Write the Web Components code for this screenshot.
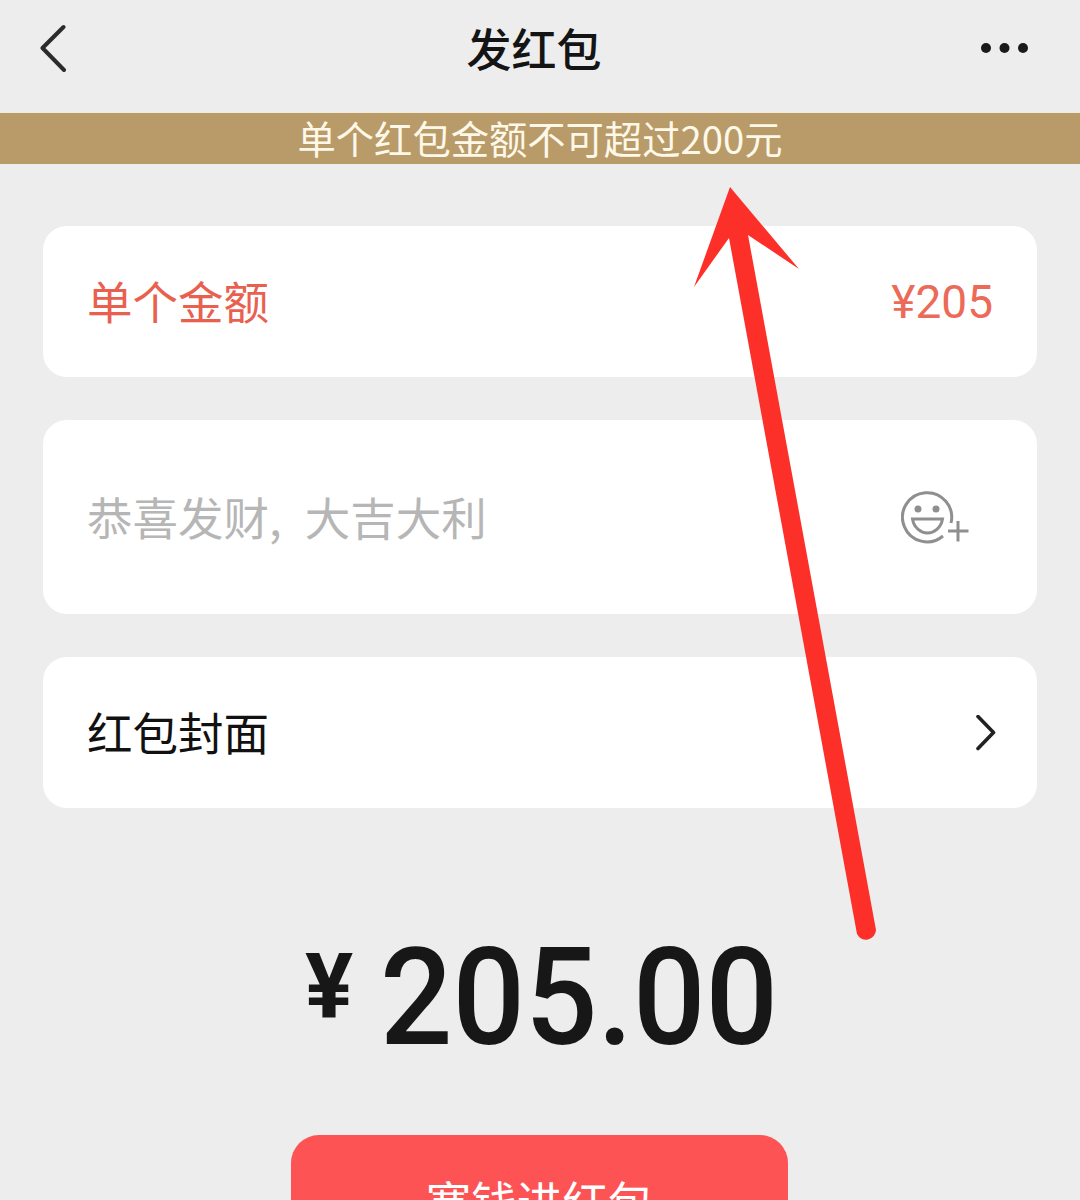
<!DOCTYPE html>
<html lang="zh">
<head>
<meta charset="utf-8">
<title>发红包</title>
<style>
  html, body { margin: 0; height: 100%; }
  body {
    width: 1080px; height: 1200px; overflow: hidden; position: relative;
    background: #ededed;
    font-family: "Noto Sans CJK SC", "Liberation Sans", sans-serif;
  }
</style>
</head>
<body>
<rp-nav>发红包</rp-nav>
<rp-banner>单个红包金额不可超过200元</rp-banner>
<rp-cards>
  <rp-card height="151" tone="#e9604f">
    单个金额
    <span slot="end" style="font-size:46px;color:#ec6a58;font-family:Roboto,sans-serif">¥205</span>
  </rp-card>
  <rp-card height="194" tone="#b6b6b6" style="--label-shift:0px">
    恭喜发财<span style="letter-spacing:23px">,</span>大吉大利
    <rp-icon slot="end" name="emoji" style="margin-right:24px"></rp-icon>
  </rp-card>
  <rp-card height="151" tone="#111">
    红包封面
    <rp-icon slot="end" name="chevron" style="margin-right:-3px"></rp-icon>
  </rp-card>
</rp-cards>
<rp-amount value="205.00"></rp-amount>
<rp-button>塞钱进红包</rp-button>
<rp-arrow></rp-arrow>

<script>
const icons = {
  back: '<svg width="30" height="48" viewBox="0 0 30 48"><path d="M23.500 3 L2.500 24 L24 46" fill="none" stroke="#2b2b2b" stroke-width="4" stroke-linecap="round" stroke-linejoin="round"/></svg>',
  more: '<svg width="50" height="12" viewBox="0 0 50 12"><circle cx="6" cy="6" r="5" fill="#1a1a1a"/><circle cx="24.500" cy="6" r="5" fill="#1a1a1a"/><circle cx="43" cy="6" r="5" fill="#1a1a1a"/></svg>',
  chevron: '<svg width="20" height="36" viewBox="0 0 20 36"><path d="M2 1.500 L17.500 17.500 L2 33.500" fill="none" stroke="#222" stroke-width="3.600" stroke-linecap="round" stroke-linejoin="round"/></svg>',
  emoji: `<svg width="68" height="54" viewBox="0 0 68 54" fill="none" stroke="#8f8f8f" stroke-width="3">
    <path d="M42 46 A24.600 24.600 0 1 1 50 33"/>
    <circle cx="17" cy="19" r="3.500" fill="#8f8f8f" stroke="none"/>
    <circle cx="35" cy="19" r="3.500" fill="#8f8f8f" stroke="none"/>
    <path d="M11.500 29 H41.500 C40 38 33 43 26.500 43 C20 43 13 38 11.500 29 Z"/>
    <path d="M47 41 H67.500 M57 31 V51.500"/>
  </svg>`
};

class RpIcon extends HTMLElement {
  connectedCallback() {
    const root = this.attachShadow({ mode: 'open' });
    root.innerHTML = `<style>:host{display:inline-flex;align-items:center}</style>${icons[this.getAttribute('name')] || ''}`;
  }
}

class RpNav extends HTMLElement {
  connectedCallback() {
    const root = this.attachShadow({ mode: 'open' });
    root.innerHTML = `
      <style>
        :host { display: flex; height: 112px; align-items: center; justify-content: space-between;
                padding: 0 50px 16px 40px; box-sizing: border-box; }
        .title { font-size: 45px; font-weight: 500; color: #141414; line-height: 1; margin-left: 18px; margin-top: -2px; }
      </style>
      <rp-icon name="back"></rp-icon>
      <div class="title"><slot></slot></div>
      <rp-icon name="more"></rp-icon>`;
  }
}

class RpBanner extends HTMLElement {
  connectedCallback() {
    const root = this.attachShadow({ mode: 'open' });
    root.innerHTML = `
      <style>
        :host { display: flex; height: 52px; align-items: center; justify-content: center; box-sizing: border-box;
                padding-bottom: 1px; background: #b99b69; border-top: 1px solid #f3ecd8; color: #fdf8e8;
                font-size: 38.300px; line-height: 1; }
      </style>
      <slot></slot>`;
  }
}

class RpCards extends HTMLElement {
  connectedCallback() {
    const root = this.attachShadow({ mode: 'open' });
    root.innerHTML = `
      <style>:host { display: flex; flex-direction: column; gap: 43px; padding: 62px 43px 0; }</style>
      <slot></slot>`;
  }
}

class RpCard extends HTMLElement {
  connectedCallback() {
    const root = this.attachShadow({ mode: 'open' });
    root.innerHTML = `
      <style>
        :host { display: flex; align-items: center; justify-content: space-between; box-sizing: border-box;
                height: ${this.getAttribute('height')}px; padding: 0 44px; background: #fff; border-radius: 24px;
                font-size: 45.500px; line-height: 1; color: ${this.getAttribute('tone')}; }
        .label { margin-top: var(--label-shift, -2px); }
      </style>
      <div class="label"><slot></slot></div>
      <slot name="end"></slot>`;
  }
}

class RpAmount extends HTMLElement {
  connectedCallback() {
    const root = this.attachShadow({ mode: 'open' });
    root.innerHTML = `
      <style>
        :host { display: flex; align-items: flex-start; margin-top: 120px; height: 207px; padding-left: 305px;
                font-family: Roboto, "Liberation Sans", sans-serif; color: #171717; }
        .cur { font-size: 90px; font-weight: 700; line-height: 120px; margin-right: 27px; }
        .val { font-size: 135px; font-weight: 500; line-height: 141px; transform: scaleX(.945); transform-origin: left top; }
      </style>
      <span class="cur">¥</span><span class="val">${this.getAttribute('value')}</span>`;
  }
}

class RpButton extends HTMLElement {
  connectedCallback() {
    const root = this.attachShadow({ mode: 'open' });
    root.innerHTML = `
      <style>
        :host { display: flex; justify-content: center; box-sizing: border-box; width: 497px; height: 65px;
                overflow: hidden; margin-left: 291px; padding-top: 43px; background: #fd5355;
                border-radius: 28px 28px 0 0; color: #fff; font-size: 45.500px; line-height: 1; }
      </style>
      <slot></slot>`;
  }
}

// red annotation arrow drawn over the screenshot
class RpArrow extends HTMLElement {
  connectedCallback() {
    const root = this.attachShadow({ mode: 'open' });
    root.innerHTML = `
      <style>:host { position: absolute; left: 0; top: 0; pointer-events: none; } svg { display: block; }</style>
      <svg width="1080" height="1200" viewBox="0 0 1080 1200">
        <path fill="#fc3029" d="M730 187 L799 269 L748 235 L876 930 A10 10 0 0 1 857 934 L729 238 L694 287 Z"/>
      </svg>`;
  }
}

customElements.define('rp-icon', RpIcon);
customElements.define('rp-nav', RpNav);
customElements.define('rp-banner', RpBanner);
customElements.define('rp-cards', RpCards);
customElements.define('rp-card', RpCard);
customElements.define('rp-amount', RpAmount);
customElements.define('rp-button', RpButton);
customElements.define('rp-arrow', RpArrow);
</script>
</body>
</html>
